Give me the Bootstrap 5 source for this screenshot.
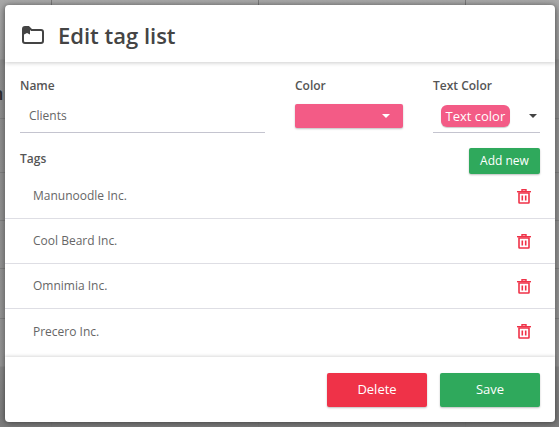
<!DOCTYPE html>
<html lang="en">
<head>
<meta charset="utf-8">
<title>Edit tag list</title>
<link href="https://cdn.jsdelivr.net/npm/bootstrap@5.3.0/dist/css/bootstrap.min.css" rel="stylesheet">
<style>
html, body { height: 100%; }
body { margin: 0; font-family: "Open Sans", sans-serif; color: #555; overflow: hidden; position: relative;
  background-color: #8f8f8f;
  background-image:
    linear-gradient(#7a7a7a, #7a7a7a), linear-gradient(#7a7a7a, #7a7a7a), linear-gradient(#7a7a7a, #7a7a7a),
    linear-gradient(#808080, #808080), linear-gradient(#808080, #808080), linear-gradient(#808080, #808080), linear-gradient(#808080, #808080), linear-gradient(#808080, #808080),
    linear-gradient(to bottom, #a8a8a8 0, #9c9c9c 59px, #8e8e8e 60px, #969696 366px, #888 367px, #7c7c7c 427px);
  background-size: 1px 100%, 1px 100%, 1px 100%, 100% 1px, 100% 1px, 100% 1px, 100% 1px, 100% 1px, 100% 100%;
  background-position: 51px 0, 258px 0, 465px 0, 0 118px, 0 172px, 0 220px, 0 268px, 0 318px, 0 0;
  background-repeat: no-repeat;
}
.behind { position: absolute; left: -8px; top: 81px; font-size: 18px; line-height: 24px; font-weight: 600; color: #2d2d2d; }
.stage { padding: 5px 4px 5px 5px; height: 427px; position: relative; }
.sheet { background: #fff; height: 417px; border-radius: 4px; box-shadow: 0 1px 7px rgba(0,0,0,.45); }
.sheet-head { height: 57px; padding: 2px 16px 0 17px; gap: 14px; box-shadow: 0 1px 4px rgba(0,0,0,.2); border-radius: 4px 4px 0 0; }
.sheet-head h1 { font-size: 22px; font-weight: 600; color: #444; margin: 2px 0 0; }
.sheet-body { height: 295px; overflow: hidden; }
.form-zone { padding: 15px 15px 0; }
.fld-name { width: 245px; margin-right: 30px; }
.fld-color { width: 108px; margin-right: 30px; }
.fld-text { width: 107px; }
.lbl { font-size: 12px; font-weight: 600; color: #555; line-height: 17px; margin-bottom: 10px; display: block; }
.name-input { border: 0; border-bottom: 1px solid #c4c4cf; border-radius: 0; font-size: 12px; padding: 2px 0 8px 9px; height: 29px; color: #666; box-shadow: none; font-family: inherit; line-height: 17px; }
.color-pick { background: #f35b86; height: 24px; width: 108px; border-radius: 2px; box-shadow: 0 1px 2px rgba(0,0,0,.25); padding-right: 13px; }
.caret-w { width: 0; height: 0; border-left: 4px solid transparent; border-right: 4px solid transparent; border-top: 4px solid #fff; }
.caret-d { border-top-color: #444; margin-top: 9px; }
.text-pick { border-bottom: 1px solid #c4c4cf; height: 29px; padding: 1px 3px 0 8px; }
.chip { background: #f35b86; color: #fff; font-size: 13px; border-radius: 6px; height: 22px; line-height: 22px; padding: 0 5px 0 4.500px; box-shadow: 0 1px 1px rgba(0,0,0,.2); }
.tags-row { padding: 0 15px; height: 26px; margin-top: 15px; }
.tags-row .lbl { margin-top: 2px; }
.btn-add { background: #2fa95c; color: #fff; font-size: 12px; font-weight: 500; border: 0; border-radius: 2px; width: 71px; height: 26px; padding: 0; box-shadow: 0 1px 2px rgba(0,0,0,.25); }
.tag-list .list-group-item { height: 45px; font-size: 12px; color: #666; padding: 0 24px 0 28px; border-color: #dedee4; border-width: 0 0 1px; background: transparent; }
.tag-list .list-group-item:last-child { border-width: 0; }
.sheet-foot { height: 65px; padding: 16px 15px 0 0; gap: 13px; box-shadow: 0 -1px 3px rgba(0,0,0,.15); position: relative; }
.btn-wide { width: 100px; height: 34px; color: #fff; font-size: 13px; font-weight: 500; border: 0; border-radius: 2px; padding: 0; box-shadow: 0 1px 2px rgba(0,0,0,.25); }
.btn-del { background: #ef3248; }
.btn-sav { background: #2fa95c; }
.btn-wide:hover, .btn-add:hover { color: #fff; }
</style>
</head>
<body>
<span class="behind">n</span>
<div class="stage">
  <div class="sheet d-flex flex-column">
    <div class="sheet-head d-flex align-items-center">
      <svg width="22" height="18" viewBox="0 0 22 18" fill="none" stroke="#444" stroke-width="2"><path d="M1 3a2 2 0 0 1 2-2h3.500l3 3h9.500a2 2 0 0 1 2 2v9a2 2 0 0 1-2 2h-16a2 2 0 0 1-2-2z"/><path d="M2 1h6v7.500l-3-1.500-3 1.500z" fill="#444" stroke="none"/></svg>
      <h1>Edit tag list</h1>
    </div>
    <div class="sheet-body">
      <div class="form-zone d-flex">
        <div class="fld-name">
          <label class="lbl" for="tagname">Name</label>
          <input id="tagname" class="form-control name-input" value="Clients">
        </div>
        <div class="fld-color">
          <span class="lbl">Color</span>
          <div class="color-pick d-flex align-items-center justify-content-end"><span class="caret-w"></span></div>
        </div>
        <div class="fld-text">
          <span class="lbl">Text Color</span>
          <div class="text-pick d-flex align-items-start justify-content-between"><span class="chip">Text color</span><span class="caret-w caret-d"></span></div>
        </div>
      </div>
      <div class="tags-row d-flex justify-content-between align-items-start">
        <span class="lbl mb-0">Tags</span>
        <button class="btn btn-add" type="button">Add new</button>
      </div>
      <ul class="list-group list-group-flush tag-list">
        <li class="list-group-item d-flex justify-content-between align-items-center"><span>Manunoodle Inc.</span><svg width="14" height="15" viewBox="0 0 14 15" fill="none" stroke="#ef3248"><path d="M0 2.700h14" stroke-width="1.400"/><path d="M5 2V.7h4V2" stroke-width="1.400"/><path d="M2 4h10v9.500a.5.5 0 0 1-.5.5h-9a.5.5 0 0 1-.5-.5z" stroke-width="1.600"/><path d="M5.300 6.500v5M8.700 6.500v5" stroke-width="1.600"/></svg></li>
        <li class="list-group-item d-flex justify-content-between align-items-center"><span>Cool Beard Inc.</span><svg width="14" height="15" viewBox="0 0 14 15" fill="none" stroke="#ef3248"><path d="M0 2.700h14" stroke-width="1.400"/><path d="M5 2V.7h4V2" stroke-width="1.400"/><path d="M2 4h10v9.500a.5.5 0 0 1-.5.5h-9a.5.5 0 0 1-.5-.5z" stroke-width="1.600"/><path d="M5.300 6.500v5M8.700 6.500v5" stroke-width="1.600"/></svg></li>
        <li class="list-group-item d-flex justify-content-between align-items-center"><span>Omnimia Inc.</span><svg width="14" height="15" viewBox="0 0 14 15" fill="none" stroke="#ef3248"><path d="M0 2.700h14" stroke-width="1.400"/><path d="M5 2V.7h4V2" stroke-width="1.400"/><path d="M2 4h10v9.500a.5.5 0 0 1-.5.5h-9a.5.5 0 0 1-.5-.5z" stroke-width="1.600"/><path d="M5.300 6.500v5M8.700 6.500v5" stroke-width="1.600"/></svg></li>
        <li class="list-group-item d-flex justify-content-between align-items-center"><span>Precero Inc.</span><svg width="14" height="15" viewBox="0 0 14 15" fill="none" stroke="#ef3248"><path d="M0 2.700h14" stroke-width="1.400"/><path d="M5 2V.7h4V2" stroke-width="1.400"/><path d="M2 4h10v9.500a.5.5 0 0 1-.5.5h-9a.5.5 0 0 1-.5-.5z" stroke-width="1.600"/><path d="M5.300 6.500v5M8.700 6.500v5" stroke-width="1.600"/></svg></li>
      </ul>
    </div>
    <div class="sheet-foot d-flex justify-content-end align-items-start">
      <button class="btn btn-wide btn-del" type="button">Delete</button>
      <button class="btn btn-wide btn-sav" type="button">Save</button>
    </div>
  </div>
</div>
</body>
</html>
